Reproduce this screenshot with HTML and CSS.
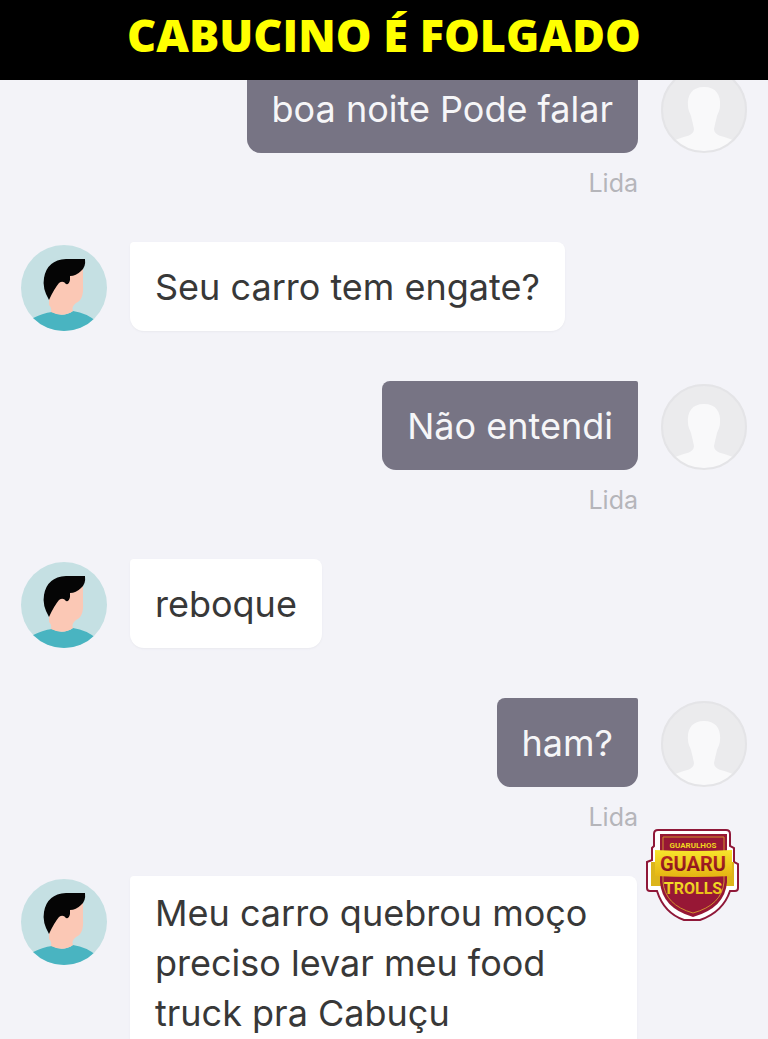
FILE: index.html
```
<!DOCTYPE html>
<html lang="pt-BR">
<head>
<meta charset="utf-8">
<meta name="viewport" content="width=device-width, initial-scale=1">
<title>Cabucino é folgado</title>
<link rel="stylesheet" href="styles.css">
</head>
<body>
<svg class="defs" width="0" height="0" aria-hidden="true">
  <defs>
    <clipPath id="disc"><circle cx="43" cy="43" r="43"/></clipPath>
    <symbol id="driver" viewBox="0 0 86 86">
      <g clip-path="url(#disc)">
        <rect width="86" height="86" fill="#c5e0e3"/>
        <path d="M10 74Q22 68 31 67Q42 73 52 66Q66 68 76 77V86H10Z" fill="#49b4c1"/>
        <path d="M28 54L28 60Q31 63 30 67Q42 73 52 66Q50 62 55 58Q63 55 62 40L62 24L40 28Z" fill="#fbc8b5"/>
        <path d="M28 55Q21 43 23 33Q26 15 45 14H64Q65 22 60 26Q55 31 49 31L49 35Q48 40 45 39Q42 35 38 38Q33 44 28 55Z" fill="#050505"/>
      </g>
    </symbol>
    <symbol id="blank" viewBox="0 0 86 86">
      <g clip-path="url(#disc)">
        <rect width="86" height="86" fill="#ebebed"/>
        <path d="M43 20C31 20 26 28 27 39C27 43 29 46 30 49Q32 57 33 62C33 69 24 69 14 73V86H72V73C62 69 53 69 53 62Q54 57 56 49C57 46 59 43 59 39C60 28 55 20 43 20Z" fill="#f9f9fa"/>
      </g>
      <circle cx="43" cy="43" r="42" fill="none" stroke="#e4e4e7" stroke-width="2"/>
    </symbol>
  </defs>
</svg>
<header class="banner"><h1 class="banner-title">CABUCINO É FOLGADO</h1></header>
<main class="chat">
  <article class="message sent">
    <svg class="avatar"><use href="#blank"/></svg>
    <div class="body"><p class="bubble">boa noite Pode falar</p><span class="status">Lida</span></div>
  </article>
  <article class="message">
    <svg class="avatar"><use href="#driver"/></svg>
    <div class="body"><p class="bubble">Seu carro tem engate?</p></div>
  </article>
  <article class="message sent">
    <svg class="avatar"><use href="#blank"/></svg>
    <div class="body"><p class="bubble">Não entendi</p><span class="status">Lida</span></div>
  </article>
  <article class="message">
    <svg class="avatar"><use href="#driver"/></svg>
    <div class="body"><p class="bubble">reboque</p></div>
  </article>
  <article class="message sent">
    <svg class="avatar"><use href="#blank"/></svg>
    <div class="body"><p class="bubble">ham?</p><span class="status">Lida</span></div>
  </article>
  <article class="message">
    <svg class="avatar"><use href="#driver"/></svg>
    <div class="body"><p class="bubble long">Meu carro quebrou moço<br>preciso levar meu food<br>truck pra Cabuçu</p></div>
  </article>
</main>
<svg class="badge" viewBox="0 0 94 94" role="img" aria-label="Guarulhos Guaru Trolls">
  <defs>
    <linearGradient id="gold" x2="0" y2="1"><stop offset="0" stop-color="#f7e52c"/><stop offset="1" stop-color="#e5b412"/></linearGradient>
    <linearGradient id="red" x2="0" y2="1"><stop offset="0" stop-color="#c12a20"/><stop offset="1" stop-color="#780d20"/></linearGradient>
  </defs>
  <path d="M12 2H80Q84 2 84 6V18L88 20V34L92 36V60Q92 63 89 63H84Q77 84 54 92H38Q18 85 11 63H4Q1 63 1 60V34L6 32V20L8 18V6Q8 2 12 2Z" fill="#fff" stroke="#8f1839" stroke-width="2"/>
  <path d="M5 34H88V58H5Z" fill="#dcb51b"/>
  <path d="M14 6H81V54Q79 80 47 89Q16 80 14 54Z" fill="#971735"/>
  <path d="M17 9H78V54Q76 77 47 85Q19 77 17 54Z" fill="none" stroke="#d0902e"/>
  <path d="M9 22Q47 24 86 22V48Q47 50 9 48Z" fill="url(#gold)"/>
  <text class="badge-top" x="47" y="20">GUARULHOS</text>
  <text class="badge-mid" x="47" y="43">GUARU</text>
  <text class="badge-low" x="47" y="66">TROLLS</text>
</svg>
</body>
</html>
```
FILE: styles.css
```
* { box-sizing: border-box; }
body {
  margin: 0;
  height: 100vh;
  display: flex;
  flex-direction: column;
  position: relative;
  overflow: hidden;
  background: #f3f3f8;
  font-family: Inter, sans-serif;
  font-optical-sizing: none;
}
.defs { position: absolute; }
.banner {
  flex: none;
  height: 80px;
  background: #000;
  text-align: center;
}
.banner-title {
  margin: 0;
  color: #ff0;
  font: 800 45px/70px "Open Sans", sans-serif;
}
.chat {
  flex: 1;
  min-height: 0;
  overflow: hidden;
  display: flex;
  flex-direction: column;
  gap: 50px;
  padding: 0 21px;
}
.message {
  flex: none;
  display: flex;
  align-items: flex-start;
  gap: 23px;
}
.message:first-child { margin-top: -16px; }
.sent { flex-direction: row-reverse; }
.avatar {
  flex: none;
  width: 86px;
  height: 86px;
  margin-top: 3px;
}
.body {
  display: flex;
  flex-direction: column;
  align-items: flex-start;
}
.sent .body { align-items: flex-end; }
.bubble {
  margin: 0;
  padding: 20px 25px 19px;
  border-radius: 4px 8px 14px 14px;
  background: #fff;
  box-shadow: 0 1px 2px #e9e9ef;
  color: #383838;
  font-size: 36px;
  font-weight: 400;
  line-height: 50px;
}
.long { padding: 12px 50px 20px 25px; }
.sent .bubble {
  border-radius: 8px 2px 14px 14px;
  background: #777484;
  box-shadow: none;
  color: #f6f6f8;
}
.status {
  height: 39px;
  padding-top: 14px;
  color: #b5b5ba;
  font-size: 25px;
  line-height: 32px;
}
.badge {
  position: absolute;
  top: 828px;
  right: 28px;
  width: 94px;
  height: 94px;
}
.badge text {
  font-family: Roboto, sans-serif;
  font-weight: 700;
  text-anchor: middle;
}
.badge-top { font-size: 8px; fill: #f0d51f; }
.badge-mid { font-size: 20px; fill: url(#red); }
.badge-low { font-size: 16px; fill: url(#gold); }
```
